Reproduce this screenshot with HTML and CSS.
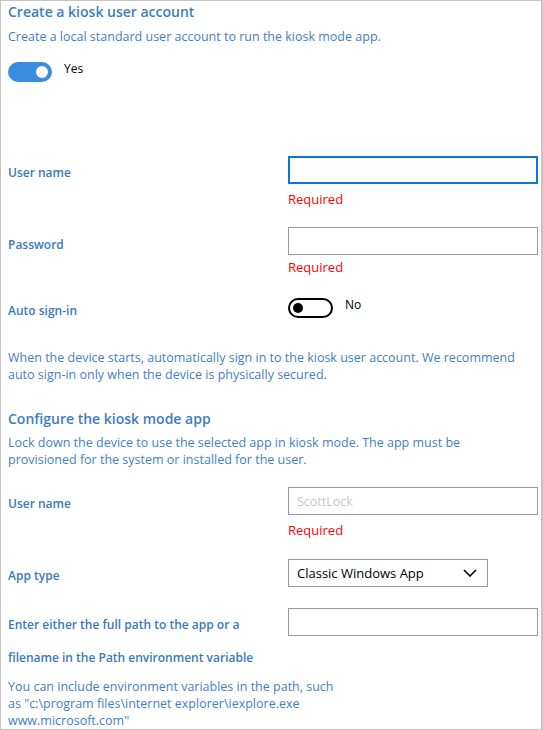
FILE: index.html
```html
<!DOCTYPE html>
<html lang="en">
<head>
<meta charset="utf-8">
<title>Kiosk</title>
<link rel="stylesheet" href="styles.css">
</head>
<body>
<div class="panel">
  <h2 class="title t1">Create a kiosk user account</h2>
  <p class="desc d1">Create a local standard user account to run the kiosk mode app.</p>
  <div class="toggle-row tr1">
    <span class="toggle on"><span class="knob"></span></span>
    <span class="toggle-text">Yes</span>
  </div>

  <div class="field f-user1">
    <label class="label">User name</label>
    <div class="control">
      <div class="input focused"></div>
      <div class="error">Required</div>
    </div>
  </div>

  <div class="field f-pass">
    <label class="label">Password</label>
    <div class="control">
      <div class="input"></div>
      <div class="error">Required</div>
    </div>
  </div>

  <div class="field f-auto">
    <label class="label">Auto sign-in</label>
    <div class="control toggle-row">
      <span class="toggle off"><span class="knob"></span></span>
      <span class="toggle-text">No</span>
    </div>
  </div>

  <p class="desc d2">When the device starts, automatically sign in to the kiosk user account. We recommend<br>auto sign-in only when the device is physically secured.</p>

  <h2 class="title t2">Configure the kiosk mode app</h2>
  <p class="desc d3">Lock down the device to use the selected app in kiosk mode. The app must be<br>provisioned for the system or installed for the user.</p>

  <div class="field f-user2">
    <label class="label">User name</label>
    <div class="control">
      <div class="input"><span class="placeholder">ScottLock</span></div>
      <div class="error">Required</div>
    </div>
  </div>

  <div class="field f-type">
    <label class="label">App type</label>
    <div class="control">
      <div class="select">
        <span>Classic Windows App</span>
        <svg class="chevron" width="14" height="8" viewBox="0 0 14 8"><path d="M1 1 L7 7 L13 1" fill="none" stroke="#000" stroke-width="1.6"/></svg>
      </div>
    </div>
  </div>

  <div class="field f-path">
    <label class="label tall"><span class="line">Enter either the full path to the app or a</span><span class="line">filename in the Path environment variable</span></label>
    <div class="control">
      <div class="input"></div>
    </div>
  </div>

  <p class="desc note">You can include environment variables in the path, such<br>as "c:\program files\internet explorer\iexplore.exe<br>www.microsoft.com"</p>
</div>
</body>
</html>
```

FILE: styles.css
```css
html, body {
  margin: 0;
  padding: 0;
  background: #fff;
}

.panel {
  box-sizing: border-box;
  width: 543px;
  height: 730px;
  border: 1px solid #c4c4c4;
  border-right-width: 2px;
  padding: 0 4px 0 7px;
  overflow: hidden;
  font-family: "Open Sans", "Noto Sans", sans-serif;
}

.title {
  margin: 0;
  font-size: 14px;
  font-weight: 600;
  line-height: 20px;
  color: #3d7cc1;
}
.t1 { margin-top: 1px; }
.t2 { margin-top: 26px; }

.desc {
  margin: 0;
  font-size: 12.5px;
  line-height: 17px;
  color: #3f80c6;
}
.d1 { margin-top: 6px; }
.d2 { margin-top: 30px; }
.d3 { margin-top: 5px; }
.note { margin-top: 4px; }

.toggle-row {
  display: flex;
  align-items: flex-start;
}
.tr1 { margin-top: 17px; }

.toggle {
  box-sizing: border-box;
  width: 44px;
  height: 20px;
  border-radius: 10px;
  display: flex;
  align-items: center;
  flex: none;
}
.toggle.on {
  background: #3a8de0;
  justify-content: flex-end;
  padding-right: 4px;
}
.toggle.on .knob {
  width: 12px;
  height: 12px;
  border-radius: 50%;
  background: #fff;
}
.toggle.off {
  border: 2px solid #000;
  padding-left: 3px;
  height: 20px;
  width: 45px;
}
.toggle.off .knob {
  width: 10px;
  height: 10px;
  border-radius: 50%;
  background: #000;
}
.toggle-text {
  margin-left: 12px;
  font-size: 12px;
  line-height: 14px;
  color: #000;
}

.field {
  display: grid;
  grid-template-columns: 280px 250px;
}
.f-user1 { margin-top: 74px; }
.f-pass { margin-top: 19px; }
.f-auto { margin-top: 22px; }
.f-user2 { margin-top: 19px; }
.f-type { margin-top: 20px; }
.f-path { margin-top: 21px; }

.label {
  font-size: 12px;
  font-weight: 600;
  line-height: 16px;
  color: #3b78bd;
  padding-top: 9px;
}
.f-pass .label { padding-top: 10px; }
.f-auto .label { padding-top: 5px; }
.label.tall {
  padding-top: 0;
  line-height: 33px;
}
.label .line { display: block; white-space: nowrap; }

.input {
  box-sizing: border-box;
  height: 28px;
  border: 1px solid #999;
  display: flex;
  align-items: center;
  padding-left: 8px;
}
.input.focused {
  border: 2px solid #0a78d7;
}
.placeholder {
  font-size: 12.5px;
  color: #c8c8c8;
}

.error {
  margin-top: 7px;
  font-size: 13px;
  line-height: 17px;
  color: #ff0000;
}
.f-pass .error { margin-top: 4px; }

.select {
  box-sizing: border-box;
  width: 200px;
  height: 28px;
  border: 1px solid #999;
  display: flex;
  align-items: center;
  justify-content: space-between;
  padding: 0 10px 0 8px;
  font-size: 13px;
  color: #000;
}
.chevron { display: block; }
```
